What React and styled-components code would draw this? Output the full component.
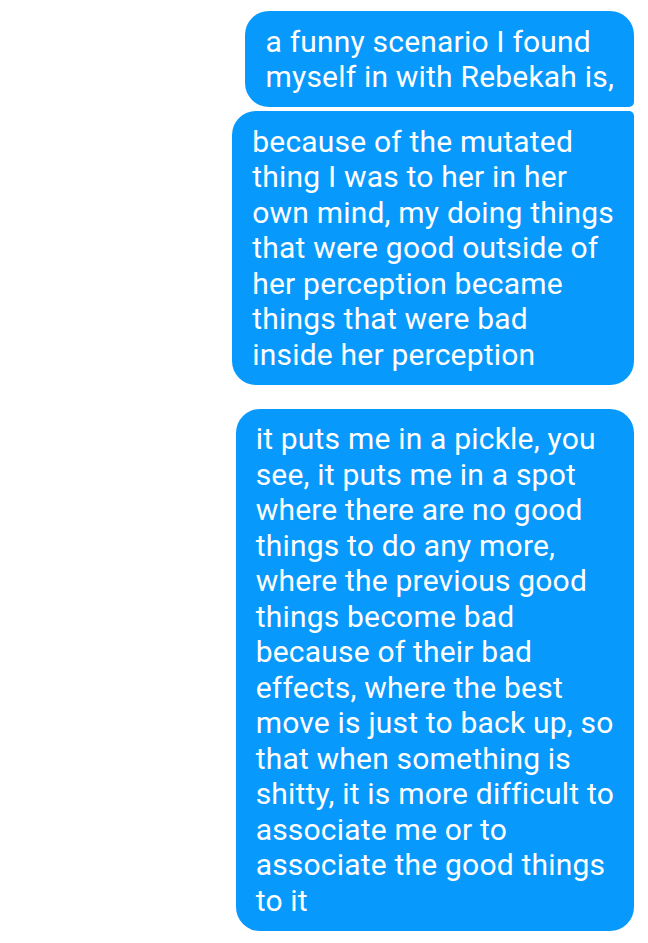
import React from "react";
import styled, { createGlobalStyle } from "styled-components";

const messages = [
  {
    id: 1,
    shape: "first",
    lines: ["a funny scenario I found", "myself in with Rebekah is,"],
  },
  {
    id: 2,
    shape: "last",
    lines: [
      "because of the mutated",
      "thing I was to her in her",
      "own mind, my doing things",
      "that were good outside of",
      "her perception became",
      "things that were bad",
      "inside her perception",
    ],
  },
  {
    id: 3,
    shape: "single",
    lines: [
      "it puts me in a pickle, you",
      "see, it puts me in a spot",
      "where there are no good",
      "things to do any more,",
      "where the previous good",
      "things become bad",
      "because of their bad",
      "effects, where the best",
      "move is just to back up, so",
      "that when something is",
      "shitty, it is more difficult to",
      "associate me or to",
      "associate the good things",
      "to it",
    ],
  },
];

const radius = {
  first: "24px 24px 5px 24px",
  last: "24px 5px 24px 24px",
  single: "24px",
};

const App = () => {
  return (
    <>
      <GlobalStyle />
      <Thread>
        {messages.map((msg) => (
          <Bubble key={msg.id} $shape={msg.shape}>
            {msg.lines.map((line, i) => (
              <Line key={i}>{line}</Line>
            ))}
          </Bubble>
        ))}
      </Thread>
    </>
  );
};

export default App;

const GlobalStyle = createGlobalStyle`
  html, body {
    margin: 0;
    padding: 0;
    background: #fff;
  }
`;

const Thread = styled.div`
  display: flex;
  flex-direction: column;
  align-items: flex-end;
  padding: 11px 14px 0 0;
  font-family: Roboto, "Noto Sans", sans-serif;
`;

const Bubble = styled.div`
  background-color: #0899fc;
  color: #fff;
  font-size: 30px;
  letter-spacing: 0.2px;
  line-height: 35.5px;
  padding: 12.5px 20px;
  border-radius: ${(p) => radius[p.$shape]};
  margin-top: ${(p) => (p.$shape === "last" ? "4px" : p.$shape === "single" ? "24px" : "0")};
`;

const Line = styled.div`
  white-space: nowrap;
`;
